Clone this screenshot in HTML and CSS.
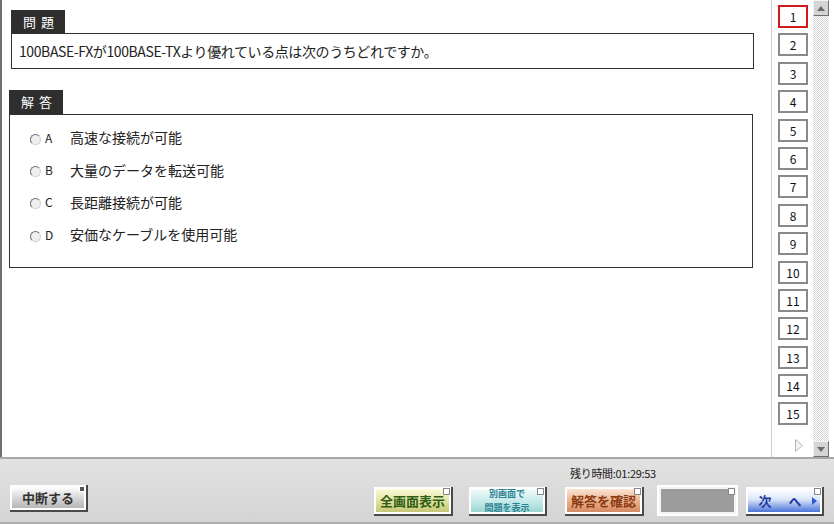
FILE: index.html
```html
<!DOCTYPE html>
<html lang="ja">
<head>
    <meta charset="UTF-8">
    <title>問題</title>
    <link rel="stylesheet" href="styles.css">
</head>
<body>
    <div class="app">
        <div class="main">
            <div class="content">
                <div class="section question">
                    <div class="tab">問 題</div>
                    <div class="box question-box">100BASE-FXが100BASE-TXより優れている点は次のうちどれですか。</div>
                </div>

                <div class="section answer">
                    <div class="tab">解 答</div>
                    <div class="box answer-box">
                        <label class="option"><span class="radio"></span><span class="letter">A</span><span class="text">高速な接続が可能</span></label>
                        <label class="option"><span class="radio"></span><span class="letter">B</span><span class="text">大量のデータを転送可能</span></label>
                        <label class="option"><span class="radio"></span><span class="letter">C</span><span class="text">長距離接続が可能</span></label>
                        <label class="option"><span class="radio"></span><span class="letter">D</span><span class="text">安価なケーブルを使用可能</span></label>
                    </div>
                </div>
            </div>

            <div class="sidebar">
                <div class="num current">1</div>
                <div class="num">2</div>
                <div class="num">3</div>
                <div class="num">4</div>
                <div class="num">5</div>
                <div class="num">6</div>
                <div class="num">7</div>
                <div class="num">8</div>
                <div class="num">9</div>
                <div class="num">10</div>
                <div class="num">11</div>
                <div class="num">12</div>
                <div class="num">13</div>
                <div class="num">14</div>
                <div class="num">15</div>
                <div class="more">
                    <svg width="8" height="13" viewBox="0 0 8 13"><path d="M0.5 0.5 L7.5 6.5 L0.5 12.5 Z" fill="#f4f4f4" stroke="#b8b8b8"/></svg>
                </div>
            </div>

            <div class="scrollbar">
                <div class="sb-btn">
                    <svg width="8" height="5" viewBox="0 0 8 5"><path d="M0 5 L4 0 L8 5 Z" fill="#6a6a6a"/></svg>
                </div>
                <div class="sb-track"></div>
                <div class="sb-btn">
                    <svg width="8" height="5" viewBox="0 0 8 5"><path d="M0 0 L8 0 L4 5 Z" fill="#6a6a6a"/></svg>
                </div>
            </div>
            <div class="edge"></div>
        </div>

        <div class="footer">
            <button class="btn btn-pause">中断する</button>
            <div class="footer-right">
                <div class="timer">残り時間:01:29:53</div>
                <div class="btn-row">
                    <button class="btn btn-full">全画面表示</button>
                    <button class="btn btn-window"><span class="line">別画面で</span><span class="line">問題を表示</span></button>
                    <button class="btn btn-check">解答を確認</button>
                    <button class="btn btn-blank"></button>
                    <button class="btn btn-next">次　へ<span class="arrow"></span></button>
                </div>
            </div>
        </div>
    </div>
</body>
</html>
```

FILE: styles.css
```css
* {
    margin: 0;
    padding: 0;
    box-sizing: border-box;
}

body {
    font-family: "Noto Sans CJK JP", "Noto Sans", sans-serif;
    background: #ffffff;
    color: #222;
    width: 834px;
    height: 524px;
    overflow: hidden;
}

.app {
    display: flex;
    flex-direction: column;
    height: 524px;
}

.main {
    display: flex;
    height: 457px;
}

.content {
    flex: 1;
    border-left: 2px solid #6b6f78;
}

/* 問題 / 解答 blocks */
.section {
    display: flex;
    flex-direction: column;
    align-items: flex-start;
}

.question {
    margin: 10px 0 0 9px;
    width: 743px;
}

.answer {
    margin: 21px 0 0 7px;
    width: 744px;
}

.tab {
    background: #2e2e2e;
    color: #fff;
    font-size: 13px;
    line-height: 23px;
    height: 23px;
    width: 54px;
    padding-left: 12px;
    letter-spacing: 1px;
}

.answer .tab {
    height: 24px;
    line-height: 24px;
}

.box {
    width: 100%;
    border: 1px solid #333;
}

.question-box {
    height: 36px;
    font-size: 14px;
    line-height: 34px;
    padding-left: 7px;
    color: #222;
    letter-spacing: -0.4px;
}

.answer-box {
    height: 154px;
    padding: 11px 0 0 20px;
    display: flex;
    flex-direction: column;
    gap: 10px;
}

.option {
    display: flex;
    align-items: center;
    height: 22.4px;
    font-size: 14px;
    color: #222;
}

.radio {
    width: 11px;
    height: 11px;
    border-radius: 50%;
    border: 1px solid;
    border-color: #6e6e6e #d4d4d4 #d4d4d4 #6e6e6e;
    background: #f0f0f0;
    margin-top: 4px;
}

.letter {
    width: 29px;
    padding-left: 4px;
    font-size: 12px;
}

/* question number list */
.sidebar {
    width: 42px;
    border-left: 1px solid #cfcfcf;
    padding: 5px 0 0 6px;
    display: flex;
    flex-direction: column;
    gap: 5.4px;
}

.num {
    width: 30px;
    height: 23px;
    border: 2px solid #8a8a8a;
    font-size: 12px;
    line-height: 19px;
    text-align: center;
    color: #111;
}

.num.current {
    border-color: #d11a1a;
}

.more {
    padding: 2px 0 0 17px;
}

/* scroll bar */
.scrollbar {
    width: 16px;
    display: flex;
    flex-direction: column;
}

.sb-btn {
    height: 16px;
    background: #d4d4d4;
    border: 1px solid;
    border-color: #f4f4f4 #6e6e6e #6e6e6e #f4f4f4;
    display: flex;
    align-items: center;
    justify-content: center;
}

.sb-track {
    flex: 1;
    background-color: #ffffff;
    background-image: conic-gradient(#d6d6d6 25%, #ffffff 0 50%, #d6d6d6 0 75%, #ffffff 0);
    background-size: 2px 2px;
}

.edge {
    width: 5px;
}

/* bottom bar */
.footer {
    height: 67px;
    background: linear-gradient(#e2e2e2, #d4d4d4);
    border-top: 2px solid #a8a8a8;
    border-bottom: 2px solid #b0b0b0;
    display: flex;
    align-items: flex-start;
    padding-left: 10px;
}

.footer-right {
    margin-left: 288px;
    display: flex;
    flex-direction: column;
}

.timer {
    font-size: 11px;
    color: #222;
    margin: 7px 0 0 196px;
    height: 15px;
    line-height: 15px;
    letter-spacing: -0.3px;
}

.btn-row {
    display: flex;
    margin-top: 6px;
}

.btn {
    position: relative;
    font-family: "Noto Sans CJK JP", sans-serif;
    font-weight: 700;
    width: 77px;
    height: 27px;
    padding: 0;
    border: 2px solid #fff;
    box-shadow: 1px 1px 0 1px #4a4a4a;
    font-size: 13px;
    cursor: pointer;
}

.btn::after {
    content: "";
    position: absolute;
    top: -1px;
    right: -1px;
    width: 5px;
    height: 5px;
    background: #fff;
    border: 1px solid #888;
}

.btn-pause {
    margin-top: 26px;
    width: 76px;
    height: 25px;
    background: linear-gradient(#ffffff, #d0d0d0 60%, #b8b8b8);
    color: #333;
}

.btn-pause::after {
    background: #555;
    border-color: #fff;
    width: 4px;
    height: 4px;
}

.btn-full {
    background: linear-gradient(#fbfbd8, #dede9a 60%, #c6c676);
    color: #2d5e12;
}

.btn-window {
    margin-left: 18px;
    width: 76px;
    background: linear-gradient(#f2fbfb, #bfe8e6 60%, #9ad6d2);
    color: #2a8294;
    font-size: 9px;
    display: flex;
    flex-direction: column;
    align-items: center;
    justify-content: center;
}

.btn-window .line {
    display: block;
    line-height: 13.1px;
}

.btn-check {
    margin-left: 20px;
    background: linear-gradient(#fbe4d4, #e8ab86 60%, #d48a62);
    color: #8c3a12;
}

.btn-blank {
    margin-left: 17px;
    background: #9c9c9c;
    box-shadow: none;
    outline: 2px solid #ffffff;
    border-color: #f4f4f4;
}

.btn-next {
    margin-left: 10px;
    width: 76px;
    background: linear-gradient(#ffffff, #dce6fa 45%, #4c74d8);
    color: #1c3ca0;
    letter-spacing: 2px;
    padding-right: 6px;
}

.btn-next .arrow {
    position: absolute;
    right: 3px;
    top: 8px;
    border-left: 5px solid #2a5ad6;
    border-top: 4px solid transparent;
    border-bottom: 4px solid transparent;
}
```
